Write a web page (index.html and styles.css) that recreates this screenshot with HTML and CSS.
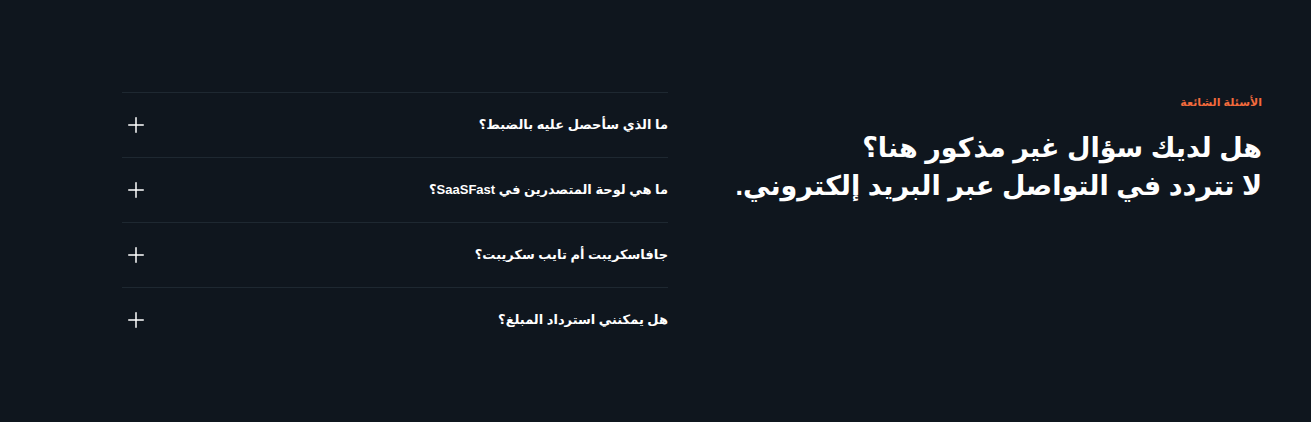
FILE: index.html
```html
<!DOCTYPE html>
<html lang="ar" dir="rtl">
<head>
  <meta charset="UTF-8">
  <meta name="viewport" content="width=device-width, initial-scale=1.0">
  <title>الأسئلة الشائعة</title>
  <link rel="stylesheet" href="styles.css">
</head>
<body>
  <section class="faq">
    <div class="faq-intro">
      <p class="faq-label">الأسئلة الشائعة</p>
      <p class="faq-title">هل لديك سؤال غير مذكور هنا؟<br>لا تتردد في التواصل عبر البريد إلكتروني.</p>
    </div>
    <ul class="faq-list">
      <li class="faq-item">
        <button class="faq-btn">
          <span class="faq-question">ما الذي سأحصل عليه بالضبط؟</span>
          <svg class="faq-icon" viewBox="0 0 16 16"><rect y="7.25" width="16" height="1.5" rx="0.75"/><rect x="7.25" width="1.5" height="16" rx="0.75"/></svg>
        </button>
      </li>
      <li class="faq-item">
        <button class="faq-btn">
          <span class="faq-question">ما هي لوحة المتصدرين في SaaSFast؟</span>
          <svg class="faq-icon" viewBox="0 0 16 16"><rect y="7.25" width="16" height="1.5" rx="0.75"/><rect x="7.25" width="1.5" height="16" rx="0.75"/></svg>
        </button>
      </li>
      <li class="faq-item">
        <button class="faq-btn">
          <span class="faq-question">جافاسكريبت أم تايب سكريبت؟</span>
          <svg class="faq-icon" viewBox="0 0 16 16"><rect y="7.25" width="16" height="1.5" rx="0.75"/><rect x="7.25" width="1.5" height="16" rx="0.75"/></svg>
        </button>
      </li>
      <li class="faq-item">
        <button class="faq-btn">
          <span class="faq-question">هل يمكنني استرداد المبلغ؟</span>
          <svg class="faq-icon" viewBox="0 0 16 16"><rect y="7.25" width="16" height="1.5" rx="0.75"/><rect x="7.25" width="1.5" height="16" rx="0.75"/></svg>
        </button>
      </li>
    </ul>
  </section>
</body>
</html>
```

FILE: styles.css
```css
* {
  margin: 0;
  padding: 0;
  box-sizing: border-box;
  font-family: "Liberation Sans", "DejaVu Sans", sans-serif;
}

body {
  background-color: #0f161e;
  color: #f5f5f5;
  height: 100vh;
  overflow: hidden;
}

.faq {
  display: flex;
  gap: 48px;
  padding: 92px 49px 0 122px;
}

.faq-intro {
  flex: 1 1 0;
  min-width: 0;
  display: flex;
  flex-direction: column;
}

.faq-label {
  font-size: 11px;
  font-weight: bold;
  line-height: 20px;
  color: #f26a3c;
  margin-bottom: 17px;
}

.faq-title {
  font-size: 27px;
  font-weight: bold;
  line-height: 38px;
  color: #ffffff;
}

.faq-list {
  flex: 1 1 0;
  min-width: 0;
  list-style: none;
}

.faq-btn {
  display: flex;
  align-items: center;
  gap: 8px;
  width: 100%;
  padding: 20px 0;
  background: none;
  border: none;
  border-top: 1px solid #1e2831;
  color: #ffffff;
  font-size: 13px;
  font-weight: bold;
  line-height: 24px;
  text-align: right;
  cursor: pointer;
}

.faq-question {
  flex: 1;
}

.faq-icon {
  width: 16px;
  height: 16px;
  margin-left: 6px;
  fill: #ffffff;
}
```
